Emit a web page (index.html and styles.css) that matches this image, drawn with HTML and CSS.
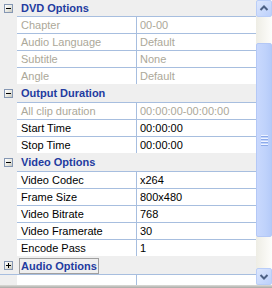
FILE: index.html
```html
<!DOCTYPE html>
<html>
<head>
<meta charset="utf-8">
<link rel="stylesheet" href="styles.css">
</head>
<body>
<div class="grid">
  <div class="list">
    <div class="row cat"><div class="gut"><span class="box minus"></span></div><div class="title">DVD Options</div></div>
    <div class="row dis"><div class="gut"></div><div class="name">Chapter</div><div class="val">00-00</div></div>
    <div class="row dis"><div class="gut"></div><div class="name">Audio Language</div><div class="val">Default</div></div>
    <div class="row dis"><div class="gut"></div><div class="name">Subtitle</div><div class="val">None</div></div>
    <div class="row dis"><div class="gut"></div><div class="name">Angle</div><div class="val">Default</div></div>
    <div class="row cat"><div class="gut"><span class="box minus"></span></div><div class="title">Output Duration</div></div>
    <div class="row dis"><div class="gut"></div><div class="name">All clip duration</div><div class="val">00:00:00-00:00:00</div></div>
    <div class="row"><div class="gut"></div><div class="name">Start Time</div><div class="val">00:00:00</div></div>
    <div class="row"><div class="gut"></div><div class="name">Stop Time</div><div class="val">00:00:00</div></div>
    <div class="row cat"><div class="gut"><span class="box minus"></span></div><div class="title">Video Options</div></div>
    <div class="row"><div class="gut"></div><div class="name">Video Codec</div><div class="val">x264</div></div>
    <div class="row"><div class="gut"></div><div class="name">Frame Size</div><div class="val">800x480</div></div>
    <div class="row"><div class="gut"></div><div class="name">Video Bitrate</div><div class="val">768</div></div>
    <div class="row"><div class="gut"></div><div class="name">Video Framerate</div><div class="val">30</div></div>
    <div class="row"><div class="gut"></div><div class="name">Encode Pass</div><div class="val">1</div></div>
    <div class="row cat"><div class="gut"><span class="box plus"></span></div><div class="title"><span class="focus">Audio Options</span></div></div>
    <div class="row last"><div class="gut"></div><div class="name"></div><div class="val"></div></div>
  </div>
  <div class="sb">
    <div class="btn up"><svg width="16" height="17" viewBox="0 0 16 17"><path d="M4.5 10 L8 6.5 L11.5 10" fill="none" stroke="#4d6185" stroke-width="2"/></svg></div>
    <div class="track top"></div>
    <div class="thumb"><span class="grip"></span><span class="grip"></span><span class="grip"></span><span class="grip"></span></div>
    <div class="track bot"></div>
    <div class="btn down"><svg width="16" height="17" viewBox="0 0 16 17"><path d="M4.5 7 L8 10.5 L11.5 7" fill="none" stroke="#4d6185" stroke-width="2"/></svg></div>
  </div>
</div>
<div class="foot"></div>
</body>
</html>
```
FILE: styles.css
```css
html, body {
  margin: 0;
  padding: 0;
  background: #efefef;
}
body {
  width: 272px;
  height: 288px;
  overflow: hidden;
  font-family: "Liberation Sans", Arial, sans-serif;
  font-size: 11px;
}
.grid {
  display: flex;
  height: 285px;
  overflow: hidden;
  background: #fff;
}
.list {
  width: 256px;
  flex: none;
  background: #efefef;
}
.row {
  display: grid;
  grid-template-columns: 17px 119px 120px;
  height: 17px;
  line-height: 16px;
  color: #000;
}
.row .gut {
  background: #efefef;
  position: relative;
}
.row .name {
  background: #fff;
  border-top: 1px solid #a7bedf;
  padding-left: 4px;
  white-space: nowrap;
  overflow: hidden;
}
.row .val {
  background: #fff;
  border-top: 1px solid #a7bedf;
  border-left: 1px solid #a7bedf;
  padding-left: 3px;
  white-space: nowrap;
  overflow: hidden;
}
.row.last .gut {
  border-top: 1px solid #a7bedf;
}
.row.dis {
  color: #aca899;
}
.row.cat {
  border-top: 1px solid #efefef;
}
.row.cat:first-child {
  border-top: 0;
  height: 16px;
}
.row.cat .title {
  grid-column: 2 / 4;
  padding-left: 4px;
  font-weight: bold;
  color: #233ba0;
  background: #efefef;
}
.focus {
  display: inline-block;
  margin-left: -2px;
  padding: 0 1px;
  height: 14px;
  line-height: 14px;
  margin-top: 1px;
  border: 1px solid #a0a0a0;
  vertical-align: top;
}
.box {
  position: absolute;
  left: 4px;
  top: 4px;
  width: 9px;
  height: 9px;
  box-sizing: border-box;
  border: 1px solid #8597b3;
  background: linear-gradient(135deg, #ffffff 0%, #e6e6de 60%, #c8c8c0 100%);
}
.box::before {
  content: "";
  position: absolute;
  left: 1px;
  top: 3px;
  width: 5px;
  height: 1px;
  background: #000;
}
.box.plus::after {
  content: "";
  position: absolute;
  left: 3px;
  top: 1px;
  width: 1px;
  height: 5px;
  background: #000;
}
.sb {
  width: 16px;
  flex: none;
  display: flex;
  flex-direction: column;
  background: linear-gradient(to right, #eeede5, #fdfdfb);
}
.btn {
  height: 17px;
  flex: none;
  box-sizing: border-box;
  border: 1px solid #b9cdf8;
  border-radius: 2px;
  background: linear-gradient(135deg, #dde7fd, #bcd0fb);
}
.btn svg {
  display: block;
  margin: -1px;
}
.track.top {
  height: 26px;
  flex: none;
}
.track.bot {
  flex: 1;
}
.thumb {
  height: 194px;
  flex: none;
  box-sizing: border-box;
  border: 1px solid #b4c8f6;
  border-radius: 2px;
  background: linear-gradient(to right, #c9d8fd, #bfd2fb 60%, #b6cbf9);
  display: flex;
  flex-direction: column;
  justify-content: center;
  align-items: center;
  gap: 1px;
}
.grip {
  width: 7px;
  height: 1px;
  background: #eef3ff;
  box-shadow: 0 1px 0 #8caaea;
  margin-bottom: 1px;
}
.foot {
  height: 3px;
  background: linear-gradient(#dcdcd8, #a8a8a4);
}
```
